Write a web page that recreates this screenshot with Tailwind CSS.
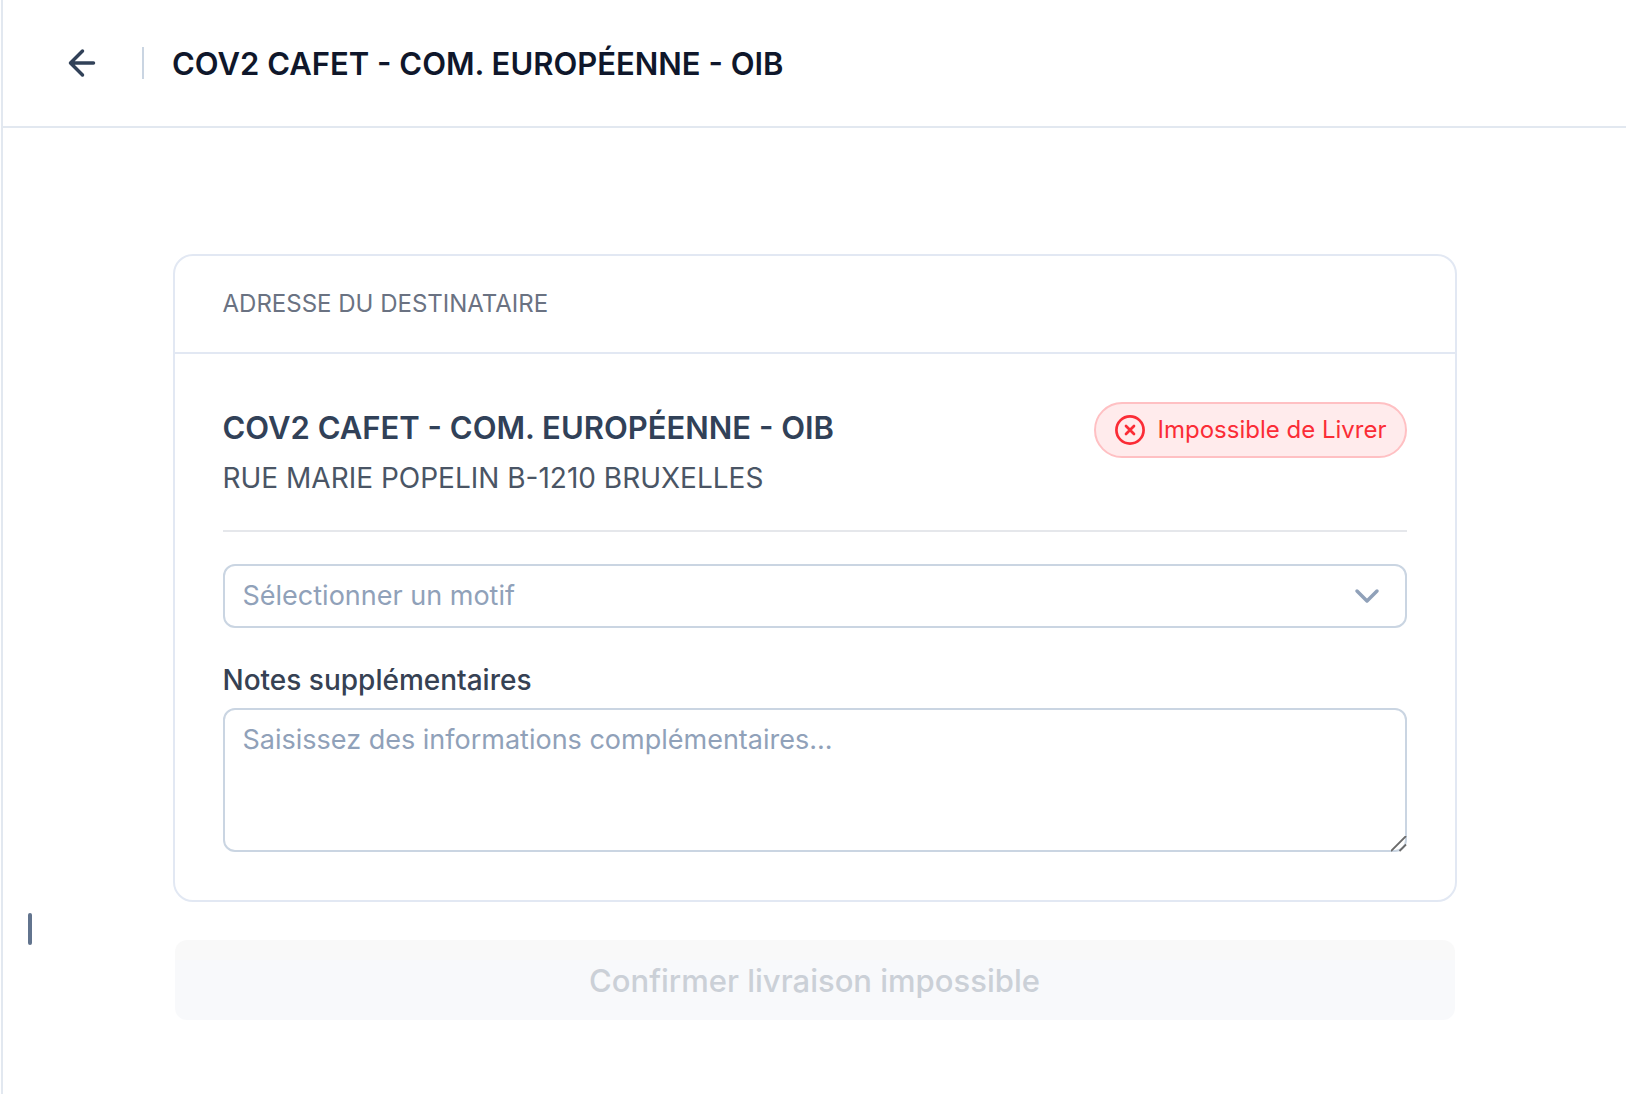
<!DOCTYPE html>
<html lang="fr">

<head>
    <meta charset="utf-8">
    <meta name="viewport" content="width=device-width, initial-scale=1">
    <title>COV2 CAFET - COM. EUROPÉENNE - OIB</title>
    <script src="https://cdn.jsdelivr.net/npm/@tailwindcss/browser@4"></script>
</head>

<body class="bg-white font-['Inter','Liberation_Sans',sans-serif]">
    <div class="relative ml-px min-h-screen border-l-2 border-slate-200">
        <header class="flex h-32 items-center border-b-2 border-slate-200 pl-[59px] pr-8">
            <button type="button" aria-label="Retour" class="text-slate-700">
                <svg class="size-10" viewBox="0 0 40 40" fill="none" stroke="currentColor" stroke-width="3.500"
                    stroke-linecap="round" stroke-linejoin="round">
                    <path d="M20.500 8 8.500 20l12 12M8.500 20h23" />
                </svg>
            </button>
            <div class="ml-10 mr-7 h-8 w-0.5 bg-slate-300"></div>
            <h1 class="pt-0.5 text-[31px] leading-10 font-semibold text-slate-900">COV2 CAFET - COM. EUROPÉENNE - OIB</h1>
        </header>

        <main class="mx-auto max-w-[1284px] pt-[126px] pb-16">
            <form>
                <section class="rounded-[20px] border-2 border-[#e2e8f3]">
                    <div class="border-b-2 border-[#e2e8f3] px-12 py-8">
                        <h2 class="text-2xl text-gray-500">ADRESSE DU DESTINATAIRE</h2>
                    </div>

                    <div class="flex flex-col gap-8 p-12">
                        <div class="flex items-start justify-between border-b-2 border-gray-200 pb-8">
                            <div>
                                <h3 class="pt-0.5 text-[31px] leading-12 font-semibold text-slate-700">COV2 CAFET - COM. EUROPÉENNE - OIB</h3>
                                <p class="mt-1.5 text-[28px] leading-10 text-gray-600">RUE MARIE POPELIN B-1210 BRUXELLES</p>
                            </div>
                            <span class="flex h-14 items-center gap-3 rounded-full border-2 border-[#ffc0c3] bg-[#ffebec] px-[18px] text-2xl text-[#fb2c36]">
                                <svg class="size-8" viewBox="0 0 32 32" fill="none" stroke="currentColor"
                                    stroke-width="2.700" stroke-linecap="round">
                                    <circle cx="16" cy="16" r="13.600" />
                                    <path d="m12 12 8 8M20 12l-8 8" />
                                </svg>
                                Impossible de Livrer
                            </span>
                        </div>

                        <div class="relative">
                            <select aria-label="Motif"
                                class="h-16 w-full appearance-none rounded-xl border-2 border-slate-300 bg-white px-[18px] text-[27px] text-slate-400">
                                <option>Sélectionner un motif</option>
                            </select>
                            <svg class="pointer-events-none absolute top-4 right-6 size-8 text-slate-400"
                                viewBox="0 0 32 32" fill="none" stroke="currentColor" stroke-width="3.500"
                                stroke-linecap="round" stroke-linejoin="round">
                                <path d="m6 11 10 10 10-10" />
                            </svg>
                        </div>

                        <div>
                            <label for="notes" class="block text-[28px] leading-10 font-medium text-gray-700">Notes supplémentaires</label>
                            <div class="relative mt-2">
                                <textarea id="notes" placeholder="Saisissez des informations complémentaires..."
                                    class="block h-36 w-full resize-y rounded-xl border-2 border-slate-300 px-[18px] py-2.5 text-[27px] leading-10 placeholder:text-slate-400 [&::-webkit-resizer]:hidden"></textarea>
                                <svg class="pointer-events-none absolute right-0 bottom-0 size-4" viewBox="0 0 16 16"
                                    fill="none" stroke="#6b6b6b" stroke-width="1.800">
                                    <path d="M0 15 15 0M8.500 15 15 8.500" />
                                </svg>
                            </div>
                        </div>
                    </div>
                </section>

                <div class="mt-[38px] px-0.5">
                    <button type="submit" disabled
                        class="h-20 w-full rounded-xl bg-[linear-gradient(#f9f9f9_25%,#f8f9fb_25%)] pt-0.5 text-[31px] font-medium text-[#cbd0d7]">
                        Confirmer livraison impossible
                    </button>
                </div>
            </form>
        </main>

        <!-- sidebar handle -->
        <div class="absolute left-[25px] top-[913px] h-8 w-1 rounded-full bg-slate-500"></div>
    </div>
</body>

</html>
